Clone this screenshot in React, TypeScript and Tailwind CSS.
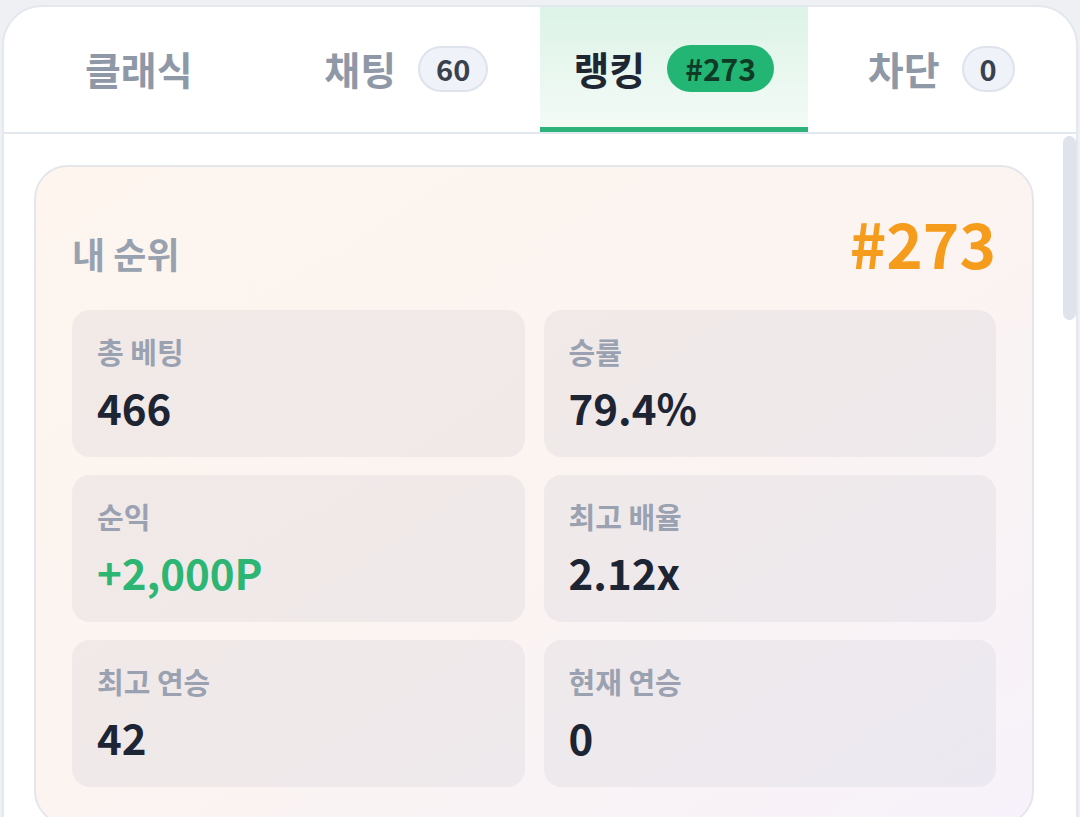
const stats = [
  { label: "총 베팅", value: "466" },
  { label: "승률", value: "79.4%" },
  { label: "순익", value: "+2,000P", green: true },
  { label: "최고 배율", value: "2.12x" },
  { label: "최고 연승", value: "42" },
  { label: "현재 연승", value: "0" },
];

function Tab({ label, badge, active, badgeTone }: { label: string; badge?: string; active?: boolean; badgeTone?: "green" | "gray" }) {
  return (
    <div
      className={
        "relative flex flex-1 items-center justify-center gap-[22px] pb-[2px] " +
        (active ? "bg-gradient-to-b from-[#ddf3e7] to-[#f4fbf7]" : "")
      }
    >
      <span className={"text-[39px] font-bold " + (active ? "text-[#1f2633]" : "text-[#8e98a7]")}>{label}</span>
      {badge &&
        (badgeTone === "green" ? (
          <span className="flex h-[47px] items-center rounded-full bg-[#22b573] px-[18px] text-[30px] font-bold text-[#0e3a26]">
            {badge}
          </span>
        ) : (
          <span className="flex h-[46px] min-w-[53px] items-center justify-center rounded-full border-2 border-[#dfe3ec] bg-[#eff2f8] px-[16px] text-[29px] font-bold text-[#3a414e]">
            {badge}
          </span>
        ))}
      {active && <div className="absolute bottom-0 left-0 right-0 h-[5px] bg-[#2eb27b]" />}
    </div>
  );
}

export default function App() {
  return (
    <div
      className="h-[817px] overflow-hidden bg-[#eef0f4] px-[2px] pt-[5px]"
      style={{ fontFamily: '"Noto Sans CJK KR", "Noto Sans", sans-serif' }}
    >
      <div className="flex h-[830px] flex-col rounded-t-[40px] border-2 border-[#e3e7ee] bg-white">
        {/* 탭 바 */}
        <div className="flex h-[127px] border-b-2 border-[#e3e7ee] px-[1px]">
          <Tab label="클래식" />
          <Tab label="채팅" badge="60" />
          <Tab label="랭킹" badge="#273" badgeTone="green" active />
          <Tab label="차단" badge="0" />
        </div>

        <div className="flex flex-1">
          <div className="flex-1 pl-[30px] pr-[29px] pt-[31px]">
            <div className="h-[660px] rounded-[34px] border-2 border-[#e4e6ec] bg-gradient-to-br from-[#fdf5ee] via-[#fcf4f1] to-[#f7f2fb] px-[36px] pt-[44px]">
              <div className="flex items-baseline justify-between">
                <span className="text-[36px] font-bold text-[#98a1af]">내 순위</span>
                <span className="text-[62px] font-bold leading-none text-[#f59c1c]">#273</span>
              </div>
              <div className="mt-[30px] grid grid-cols-2 gap-x-[19px] gap-y-[18px]">
                {stats.map((s) => (
                  <div key={s.label} className="h-[147px] rounded-[18px] bg-[#64748b]/[0.08] pl-[25px] pt-[21px]">
                    <div className="text-[29px] font-bold leading-[40px] text-[#9aa2b1]">{s.label}</div>
                    <div
                      className={
                        "mt-[12px] text-[42px] font-bold leading-[48px] " +
                        (s.green ? "text-[#2db573]" : "text-[#1d2433]")
                      }
                    >
                      {s.value}
                    </div>
                  </div>
                ))}
              </div>
            </div>
          </div>
          {/* 스크롤바 */}
          <div className="w-[13px] pt-[2px]">
            <div className="h-[184px] rounded-full bg-[#dfe3ec]" />
          </div>
        </div>
      </div>
    </div>
  );
}
